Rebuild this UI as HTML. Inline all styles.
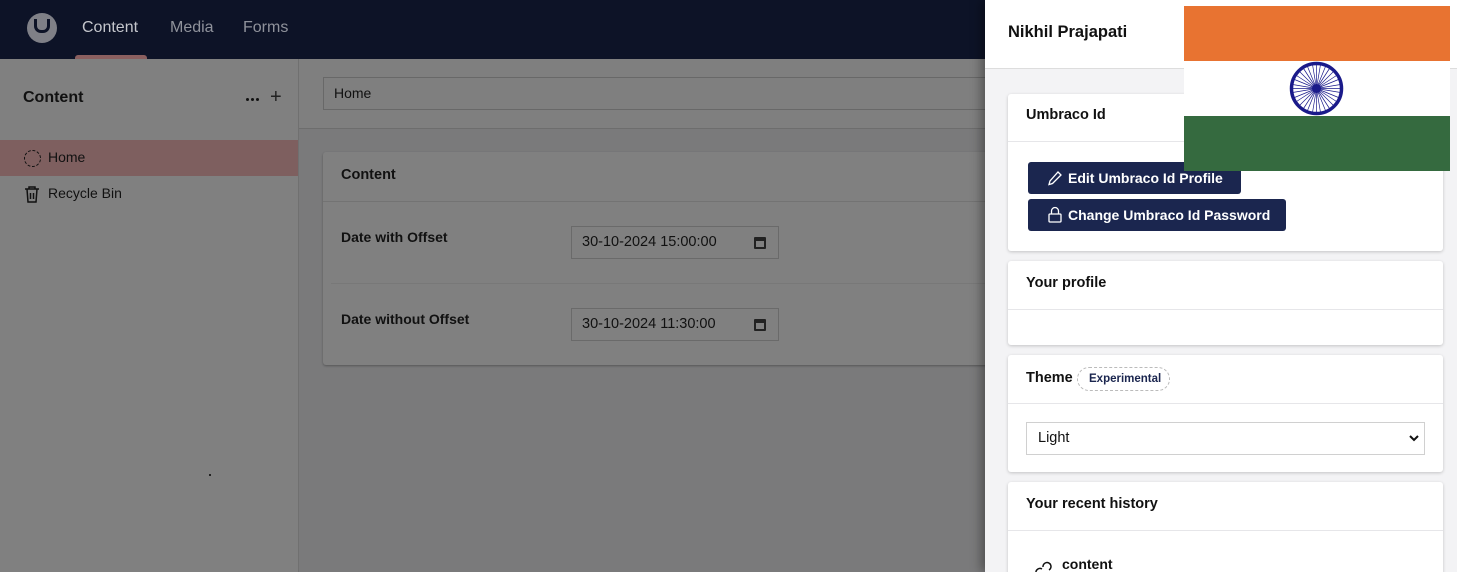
<!DOCTYPE html>
<html style="width:1457px;height:572px;overflow:hidden"><head><meta charset="utf-8"><style>
*{box-sizing:border-box;margin:0;padding:0}
body{width:1457px;height:572px;overflow:hidden;position:relative;font-family:"Liberation Sans",sans-serif;background:#7a7a7b;color:#0a0a0a}
.abs{position:absolute}
.hdr{left:0;top:0;width:985px;height:59px;background:#0d1327}
.nav{top:19px;font-size:16px;color:#8f929b}
.side{left:0;top:59px;width:299px;height:513px;background:#808080;border-right:1px solid #707070}
.card{background:#fff;border-radius:3px;box-shadow:0 1px 3px rgba(0,0,0,.2)}
.ct{font-size:14.5px;font-weight:bold;color:#111}
.hr{height:1px;background:#e6e6e9}
.btn{background:#1b264f;color:#fff;font-weight:bold;font-size:14px;border-radius:3px;height:32px;display:flex;align-items:center;padding-left:20px}
.din{border:1px solid #6a6a6a;background:#808080;font-size:14.5px;color:#111;padding:7px 10px;width:208px;height:33px}
</style></head><body>
<div class="abs hdr"></div>
<div class="abs" style="left:27px;top:13px;width:30px;height:30px;border-radius:50%;background:#7f8087"></div>
<div class="abs" style="left:34px;top:19px;width:16px;height:14px;border:3px solid #0d1327;border-top:none;border-radius:0 0 7px 7px"></div>
<div class="abs nav" style="left:82px;color:#c4c6cc">Content</div>
<div class="abs nav" style="left:170px">Media</div>
<div class="abs nav" style="left:243px">Forms</div>
<div class="abs" style="left:75px;top:55px;width:72px;height:4px;background:#8a5f5f;border-radius:3px 3px 0 0"></div>
<div class="abs side"></div>
<div class="abs" style="left:23px;top:89px;font-size:16px;font-weight:bold;color:#111">Content</div>
<div class="abs" style="left:246px;top:98px;width:3px;height:3px;background:#111;border-radius:50%;box-shadow:5px 0 #111,10px 0 #111"></div>
<div class="abs" style="left:270px;top:86px;font-size:20px;color:#222">+</div>
<div class="abs" style="left:0;top:140px;width:298px;height:36px;background:#7e5f5f"></div>
<div class="abs" style="left:24px;top:150px;width:17px;height:17px;border:1.5px dashed #111;border-radius:50%"></div>
<div class="abs" style="left:48px;top:149px;font-size:14px;color:#111">Home</div>
<svg class="abs" style="left:24px;top:185px" width="16" height="18" viewBox="0 0 16 18" fill="none" stroke="#111" stroke-width="1.5"><path d="M1 4h14M5 4V2h6v2M3 4l1 13h8l1-13M6.5 8v6M9.5 8v6"/></svg>
<div class="abs" style="left:48px;top:185px;font-size:14px;color:#111">Recycle Bin</div>
<div class="abs" style="left:299px;top:59px;width:700px;height:70px;background:#7f7f7f;border-bottom:1px solid #6d6d6d"></div>
<div class="abs" style="left:323px;top:77px;width:680px;height:33px;border:1px solid #686868;padding:7px 10px;font-size:14px;color:#111">Home</div>
<div class="abs" style="left:323px;top:152px;width:680px;height:213px;background:#808080;border-radius:3px;box-shadow:0 1px 2px rgba(0,0,0,.3)"></div>
<div class="abs ct" style="left:341px;top:167px">Content</div>
<div class="abs" style="left:323px;top:201px;width:680px;height:1px;background:#737373"></div>
<div class="abs" style="left:331px;top:283px;width:670px;height:1px;background:#787878"></div>
<div class="abs ct" style="left:341px;top:229px;font-size:14px">Date with Offset</div>
<div class="abs ct" style="left:341px;top:311px;font-size:14px">Date without Offset</div>
<div class="abs din" style="left:571px;top:226px">30-10-2024 15:00:00</div>
<div class="abs din" style="left:571px;top:308px">30-10-2024 11:30:00</div>
<div class="abs" style="left:754px;top:237px;width:12px;height:12px;border:2px solid #222;border-top-width:4px;border-radius:1px"></div>
<div class="abs" style="left:754px;top:319px;width:12px;height:12px;border:2px solid #222;border-top-width:4px;border-radius:1px"></div>
<!-- right panel -->
<div class="abs" style="left:985px;top:0;width:472px;height:572px;background:#f3f3f5;box-shadow:-4px 0 10px rgba(0,0,0,.35);overflow:hidden">
<div class="abs" style="left:0;top:0;width:472px;height:69px;background:#fff;border-bottom:1px solid #ddd"></div>
<div class="abs" style="left:23px;top:23px;font-size:16.5px;font-weight:bold;color:#111">Nikhil Prajapati</div>
<div class="abs card" style="left:23px;top:94px;width:435px;height:157px"></div>
<div class="abs ct" style="left:41px;top:107px">Umbraco Id</div>
<div class="abs hr" style="left:23px;top:141px;width:435px"></div>
<div class="abs btn" style="left:43px;top:162px;width:213px;padding-left:40px">Edit Umbraco Id Profile</div>
<svg class="abs" style="left:62px;top:170px" width="16" height="16" viewBox="0 0 16 16" fill="none" stroke="#fff" stroke-width="1.3"><path d="M11 2l3 3-8.5 8.5L2 14.5l1-3.5z"/></svg>
<div class="abs btn" style="left:43px;top:199px;width:258px;padding-left:40px">Change Umbraco Id Password</div>
<svg class="abs" style="left:62px;top:206px" width="16" height="17" viewBox="0 0 16 17" fill="none" stroke="#fff" stroke-width="1.3"><rect x="2" y="8" width="12" height="8" rx="1"/><path d="M4.5 8V5a3.5 3.5 0 0 1 7 0v3"/></svg>
<div class="abs card" style="left:23px;top:261px;width:435px;height:84px"></div>
<div class="abs ct" style="left:41px;top:275px">Your profile</div>
<div class="abs hr" style="left:23px;top:309px;width:435px"></div>
<div class="abs card" style="left:23px;top:355px;width:435px;height:117px"></div>
<div class="abs ct" style="left:41px;top:370px">Theme</div>
<div class="abs" style="left:92px;top:367px;width:93px;height:24px;border:1px dashed #bbb;border-radius:12px;font-size:11.5px;font-weight:bold;color:#1b264f;padding:5px 0 0 11px">Experimental</div>
<div class="abs hr" style="left:23px;top:403px;width:435px"></div>
<div class="abs" style="left:41px;top:422px;width:399px;height:33px;border:1px solid #d0d0d0;padding:7px 11px;font-size:14.5px;color:#111">Light</div>
<svg class="abs" style="left:424px;top:434px" width="10" height="8" viewBox="0 0 10 8"><path d="M1 2l4 4 4-4" fill="none" stroke="#111" stroke-width="2"/></svg>
<div class="abs card" style="left:23px;top:482px;width:435px;height:100px"></div>
<div class="abs ct" style="left:41px;top:496px">Your recent history</div>
<div class="abs hr" style="left:23px;top:530px;width:435px"></div>
<div class="abs ct" style="left:77px;top:556px;font-size:14px">content</div>
<svg class="abs" style="left:48px;top:561px" width="20" height="12" viewBox="0 0 20 12" fill="none" stroke="#111" stroke-width="1.5"><path d="M3 12a4 4 0 0 1 6-4M10 6a4 4 0 1 1 6 3"/></svg>
</div>
<!-- flag -->
<div class="abs" style="left:1184px;top:6px;width:266px;height:55px;background:#e87331"></div>
<div class="abs" style="left:1184px;top:61px;width:266px;height:55px;background:#fff"></div>
<div class="abs" style="left:1184px;top:116px;width:266px;height:55px;background:#356a3f"></div>
<svg class="abs" style="left:1289px;top:61px" width="55" height="55" viewBox="-27.5 -27.5 55 55">
<circle r="25" fill="none" stroke="#1a1a8a" stroke-width="3.5"/>
<g stroke="#1a1a8a" stroke-width="0.7">
<path d="M-24 0H24M0-24V24M-17-17L17 17M-17 17L17-17M-22-9L22 9M-22 9L22-9M-9-22L9 22M9-22L-9 22M-24-4L24 4M-24 4L24-4M-4-24L4 24M4-24L-4 24M-20-13L20 13M-20 13L20-13M-13-20L13 20M13-20L-13 20"/></g>
<circle r="4.5" fill="#1a1a8a"/></svg>
<div class="abs" style="left:209px;top:474px;width:2px;height:2px;background:#222"></div>
</body></html>
